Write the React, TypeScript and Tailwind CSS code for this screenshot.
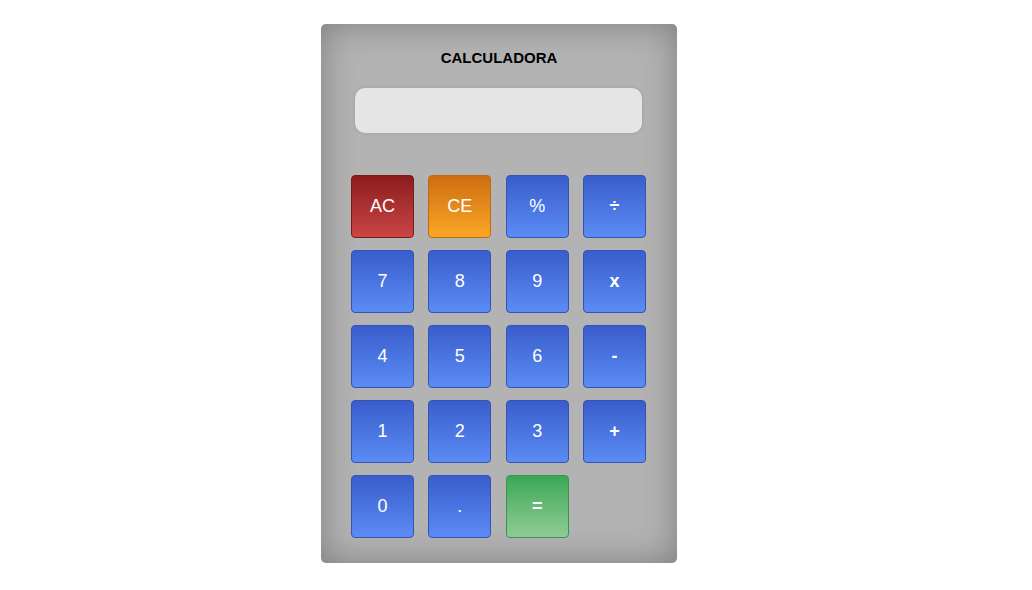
const keys: { label: string; kind: "num" | "clear" | "ce" | "eq"; op?: boolean }[] = [
  { label: "AC", kind: "clear" },
  { label: "CE", kind: "ce" },
  { label: "%", kind: "num" },
  { label: "÷", kind: "num", op: true },
  { label: "7", kind: "num" },
  { label: "8", kind: "num" },
  { label: "9", kind: "num" },
  { label: "x", kind: "num", op: true },
  { label: "4", kind: "num" },
  { label: "5", kind: "num" },
  { label: "6", kind: "num" },
  { label: "-", kind: "num", op: true },
  { label: "1", kind: "num" },
  { label: "2", kind: "num" },
  { label: "3", kind: "num" },
  { label: "+", kind: "num", op: true },
  { label: "0", kind: "num" },
  { label: ".", kind: "num" },
  { label: "=", kind: "eq", op: true },
];

const styles = {
  num: "bg-gradient-to-b from-[#3a5dcc] to-[#5b8cf6] border-[#3553b0]",
  clear: "bg-gradient-to-b from-[#8c1b1d] to-[#cb4646] border-[#7a1a1a]",
  ce: "bg-gradient-to-b from-[#cd6d12] to-[#fba626] border-[#c06a14]",
  eq: "bg-gradient-to-b from-[#38a856] to-[#8dcc94] border-[#3a9350]",
};

export default function App() {
  return (
    <div className="min-h-screen bg-white pl-[321px] pt-6 font-['Liberation_Sans',Arial,sans-serif]">
      <div className="w-[356px] h-[539px] rounded-[5px] bg-[#b3b3b3] shadow-[inset_0_0_35px_rgba(0,0,0,0.3)] flex flex-col items-center pt-[25px]">
        <h1 className="text-[15px] leading-[17px] font-bold text-black">CALCULADORA</h1>
        <div className="mt-[22px] mr-[2px] w-[287px] h-[45px] rounded-[10px] bg-[#e5e5e5] shadow-[0_0_4px_rgba(0,0,0,0.12)]" />
        <div className="mt-[42px] mr-[1px] grid grid-cols-[repeat(4,63px)] gap-x-[14.3px] gap-y-[12px]">
          {keys.map((k) => (
            <button
              key={k.label}
              className={`w-[63px] h-[63px] rounded-[4px] border text-white text-[18px] ${k.op ? "font-bold" : ""} ${styles[k.kind]}`}
            >
              {k.label}
            </button>
          ))}
        </div>
      </div>
    </div>
  );
}
